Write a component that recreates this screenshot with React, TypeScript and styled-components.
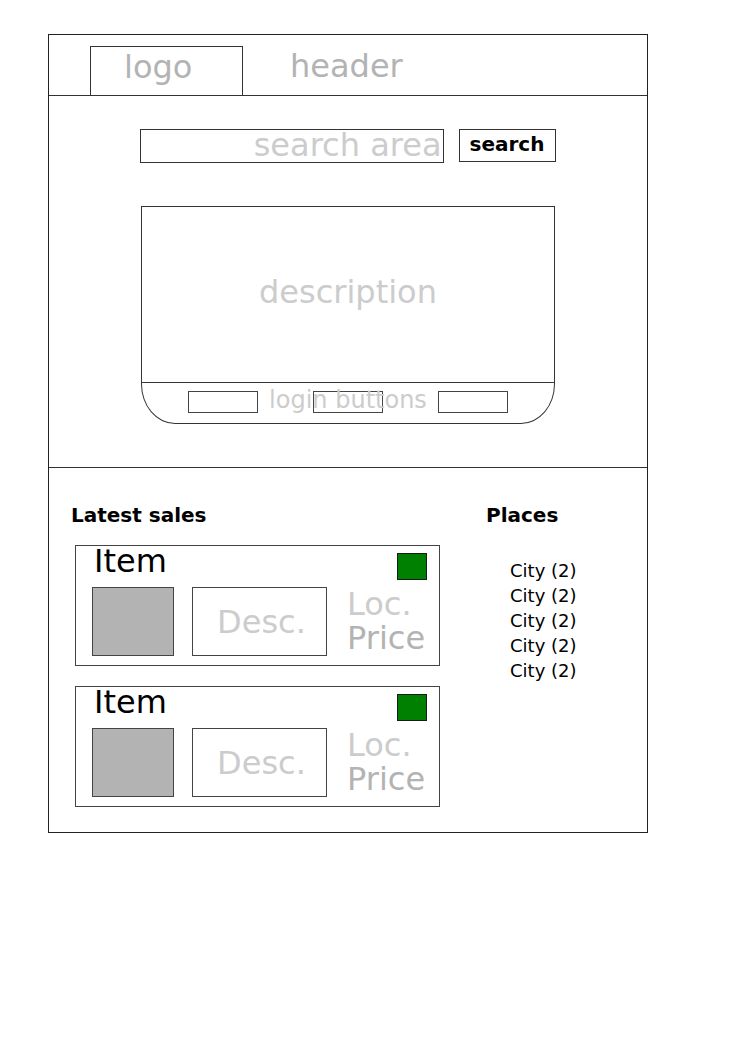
import React from "react";
import styled, { createGlobalStyle } from "styled-components";

const GlobalStyle = createGlobalStyle`
  html, body { margin: 0; padding: 0; background: #fff; }
  body { font-family: "DejaVu Sans", "Liberation Sans", sans-serif; }
  * { box-sizing: border-box; }
`;

const Frame = styled.div`
  margin: 34px 0 0 48px;
  width: 600px;
  height: 799px;
  border: 1px solid #222;
  display: flex;
  flex-direction: column;
`;

const Header = styled.header`
  height: 61px;
  flex: none;
  border-bottom: 1px solid #333;
  display: flex;
  align-items: flex-start;
  padding: 11px 0 0 41px;
`;

const LogoBox = styled.div`
  width: 153px;
  height: 49px;
  border: 1px solid #333;
  border-bottom: none;
  padding: 4px 0 0 33px;
  font-size: 32px;
  line-height: 32px;
  color: #b3b3b3;
`;

const HeaderTitle = styled.div`
  margin: 4px 0 0 47px;
  font-size: 32px;
  line-height: 32px;
  color: #b3b3b3;
`;

const Hero = styled.section`
  flex: none;
  height: 372px;
  border-bottom: 1px solid #333;
  padding-top: 33px;
  display: flex;
  flex-direction: column;
  align-items: center;
`;

const SearchRow = styled.div`
  display: flex;
  align-items: flex-start;
  gap: 15px;
  margin-left: -1px;
`;

const SearchField = styled.div`
  width: 304px;
  height: 34px;
  border: 1px solid #333;
  padding: 0 1px 0 0;
  text-align: right;
  font-size: 32px;
  line-height: 31px;
  color: #ccc;
  overflow: visible;
  white-space: nowrap;
`;

const SearchButton = styled.button`
  width: 97px;
  height: 33px;
  border: 1px solid #333;
  background: #fff;
  padding: 0 0 3px 0;
  font-family: "DejaVu Sans", sans-serif;
  font-weight: bold;
  font-size: 20px;
  line-height: 24px;
  color: #000;
  display: flex;
  align-items: center;
  justify-content: center;
`;

const Card = styled.div`
  margin-top: 43px;
  width: 414px;
  display: flex;
  flex-direction: column;
`;

const Description = styled.div`
  height: 176px;
  border: 1px solid #333;
  border-bottom: none;
  display: flex;
  align-items: center;
  justify-content: center;
  padding-bottom: 6px;
  font-size: 32px;
  color: #ccc;
`;

const LoginBar = styled.div`
  position: relative;
  height: 42px;
  border: 1px solid #333;
  border-radius: 0 0 34px 34px / 0 0 40px 40px;
  display: flex;
  justify-content: center;
  align-items: flex-start;
  gap: 55px;
  padding-top: 8px;
`;

const LoginButton = styled.div`
  width: 70px;
  height: 22px;
  border: 1px solid #444;
`;

const LoginLabel = styled.div`
  position: absolute;
  top: 3px;
  left: 0;
  right: 0;
  text-align: center;
  font-size: 24px;
  line-height: 28px;
  color: #ccc;
  pointer-events: none;
`;

const Lower = styled.section`
  flex: 1;
  display: grid;
  grid-template-columns: 415px 1fr;
  padding: 35px 0 0 22px;
`;

const Column = styled.div`
  display: flex;
  flex-direction: column;
`;

const SectionTitle = styled.h2`
  margin: 0;
  font-size: 20px;
  line-height: 24px;
  font-weight: bold;
  color: #000;
`;

const SaleList = styled.div`
  margin: 18px 0 0 4px;
  display: flex;
  flex-direction: column;
  gap: 20px;
`;

const SaleCard = styled.div`
  width: 365px;
  height: 121px;
  border: 1px solid #444;
  display: flex;
  flex-direction: column;
`;

const SaleTop = styled.div`
  height: 41px;
  display: flex;
  justify-content: space-between;
  align-items: flex-start;
  padding: 0 12px 0 18px;
`;

const ItemTitle = styled.div`
  font-size: 32px;
  line-height: 30px;
  color: #000;
`;

const StatusSquare = styled.div<{ $color: string }>`
  margin-top: 7px;
  width: 30px;
  height: 27px;
  background: ${(p) => p.$color};
  border: 1px solid #1a1a1a;
`;

const SaleBody = styled.div`
  display: flex;
  align-items: flex-start;
  padding-left: 16px;
`;

const Thumb = styled.div`
  width: 82px;
  height: 69px;
  background: #b3b3b3;
  border: 1px solid #444;
`;

const DescBox = styled.div`
  margin-left: 18px;
  width: 135px;
  height: 69px;
  border: 1px solid #444;
  display: flex;
  align-items: center;
  justify-content: center;
  padding-left: 4px;
  font-size: 32px;
  color: #ccc;
`;

const Meta = styled.div`
  margin-left: 20px;
  display: flex;
  flex-direction: column;
  font-size: 32px;
  line-height: 34px;
`;

const MetaLine = styled.div<{ $tone: string }>`
  color: ${(p) => p.$tone};
`;

const CityList = styled.ul`
  list-style: none;
  margin: 31px 0 0 0;
  padding: 0 0 0 24px;
`;

const City = styled.li`
  font-size: 18px;
  line-height: 25px;
  color: #000;
`;

const sales = [{ id: 1 }, { id: 2 }];
const cities = ["City (2)", "City (2)", "City (2)", "City (2)", "City (2)"];

export default function App() {
  return (
    <>
      <GlobalStyle />
      <Frame>
        <Header>
          <LogoBox>logo</LogoBox>
          <HeaderTitle>header</HeaderTitle>
        </Header>
        <Hero>
          <SearchRow>
            <SearchField>search area</SearchField>
            <SearchButton>search</SearchButton>
          </SearchRow>
          <Card>
            <Description>description</Description>
            <LoginBar>
              <LoginButton />
              <LoginButton />
              <LoginButton />
              <LoginLabel>login buttons</LoginLabel>
            </LoginBar>
          </Card>
        </Hero>
        <Lower>
          <Column>
            <SectionTitle>Latest sales</SectionTitle>
            <SaleList>
              {sales.map((s) => (
                <SaleCard key={s.id}>
                  <SaleTop>
                    <ItemTitle>Item</ItemTitle>
                    <StatusSquare $color="#008000" />
                  </SaleTop>
                  <SaleBody>
                    <Thumb />
                    <DescBox>Desc.</DescBox>
                    <Meta>
                      <MetaLine $tone="#ccc">Loc.</MetaLine>
                      <MetaLine $tone="#b3b3b3">Price</MetaLine>
                    </Meta>
                  </SaleBody>
                </SaleCard>
              ))}
            </SaleList>
          </Column>
          <Column>
            <SectionTitle>Places</SectionTitle>
            <CityList>
              {cities.map((c, i) => (
                <City key={i}>{c}</City>
              ))}
            </CityList>
          </Column>
        </Lower>
      </Frame>
    </>
  );
}
